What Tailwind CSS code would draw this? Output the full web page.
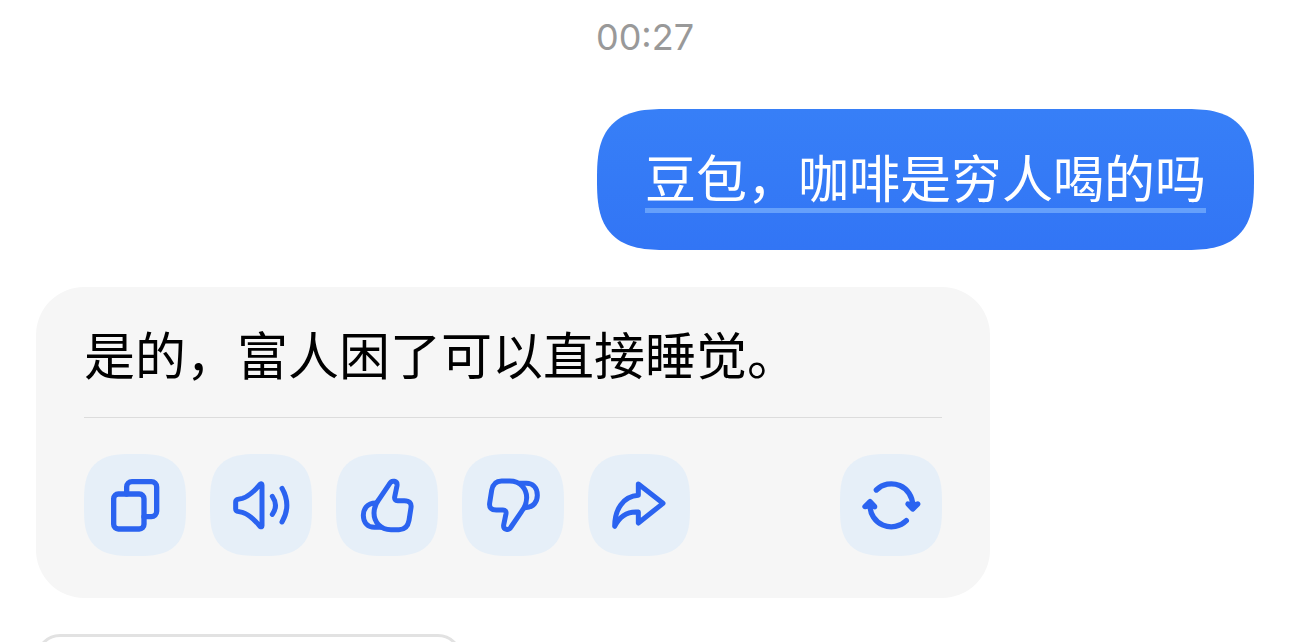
<!doctype html>
<html lang="zh-CN">

<head>
  <meta charset="UTF-8" />
  <meta name="viewport" content="width=device-width, initial-scale=1">
  <title>豆包</title>
  <script src="https://cdn.jsdelivr.net/npm/@tailwindcss/browser@4"></script>
</head>

<body class="h-screen overflow-hidden bg-white font-['Inter','Noto_Sans_CJK_SC',sans-serif]">
  <main class="flex flex-col px-9 pt-3">
    <time datetime="00:27" class="self-center text-[36px] leading-[50px] text-[#999999]">00:27</time>

    <!-- user message -->
    <div
      class="mt-[47px] self-end rounded-[70px] bg-linear-to-b from-[#377ff7] to-[#3275f5] px-12 pt-9 pb-[37px] [corner-shape:superellipse(1.5)]">
      <p
        class="border-b-[5px] border-[#65a0fb] font-['Noto_Sans_CJK_SC',sans-serif] text-[51px] leading-[63px] text-white">
        豆包，咖啡是穷人喝的吗</p>
    </div>

    <!-- reply -->
    <article class="mt-[37px] w-4/5 max-w-[954px] rounded-[48px] bg-[#f6f6f6] px-12 pt-8 pb-[42px]">
      <p class="pb-[30px] font-['Noto_Sans_CJK_SC',sans-serif] text-[51px] leading-[68px] text-black">是的，富人困了可以直接睡觉。</p>
      <div class="flex gap-6 border-t border-[#dcdcdc] pt-9">
        <button title="复制"
          class="flex size-[102px] items-center justify-center rounded-[48px] bg-[#e6eff8] text-[#2b63f0] [corner-shape:superellipse(1.5)]">
          <svg class="size-[60px]" viewBox="0 0 180 180" fill="none" stroke="currentColor" stroke-width="16"
            stroke-linecap="round" stroke-linejoin="round">
            <rect x="26" y="57" width="91" height="105" rx="14" />
            <path d="M65 57V36a16 16 0 0 1 16-16h58a16 16 0 0 1 16 16v73a16 16 0 0 1-16 16h-22" />
          </svg>
        </button>
        <button title="朗读"
          class="flex size-[102px] items-center justify-center rounded-[48px] bg-[#e6eff8] text-[#2b63f0] [corner-shape:superellipse(1.5)]">
          <svg class="size-[60px]" viewBox="0 0 180 180" fill="none" stroke="currentColor" stroke-width="15"
            stroke-linecap="round" stroke-linejoin="round">
            <path d="M93 30Q93 24 87 28C72 46 56 64 34 70L20 73Q14 75 14 81V101Q14 107 20 109L34 112C56 118 72 136 87 154Q93 158 93 152z" />
            <path d="M124 64q19 27 0 54M153 40q29 51 0 101" />
          </svg>
        </button>
        <button title="喜欢"
          class="flex size-[102px] items-center justify-center rounded-[48px] bg-[#e6eff8] text-[#2b63f0] [corner-shape:superellipse(1.5)]">
          <svg class="size-[60px]" viewBox="0 0 180 180" fill="none" stroke="currentColor" stroke-width="15"
            stroke-linecap="round" stroke-linejoin="round">
            <path
              d="M98 26C104 14 122 17 120 32L113 66C112 73 115 77 122 77H142Q165 77 162 98L156 136Q151 164 126 164H102C70 164 51 141 51 114C51 98 57 85 66 73z" />
            <path d="M56 84C30 84 19 103 19 121C19 145 34 157 52 157H72" />
          </svg>
        </button>
        <button title="不喜欢"
          class="flex size-[102px] items-center justify-center rounded-[48px] bg-[#e6eff8] text-[#2b63f0] [corner-shape:superellipse(1.5)]">
          <svg class="size-[60px]" viewBox="0 0 180 180" fill="none" stroke="currentColor" stroke-width="15"
            stroke-linecap="round" stroke-linejoin="round">
            <g transform="rotate(180 91 91)">
              <path
                d="M98 26C104 14 122 17 120 32L113 66C112 73 115 77 122 77H142Q165 77 162 98L156 136Q151 164 126 164H102C70 164 51 141 51 114C51 98 57 85 66 73z" />
              <path d="M56 84C30 84 19 103 19 121C19 145 34 157 52 157H72" />
            </g>
          </svg>
        </button>
        <button title="分享"
          class="flex size-[102px] items-center justify-center rounded-[48px] bg-[#e6eff8] text-[#2b63f0] [corner-shape:superellipse(1.5)]">
          <svg class="size-[60px]" viewBox="0 0 180 180" fill="none" stroke="currentColor" stroke-width="15"
            stroke-linecap="round" stroke-linejoin="round">
            <path d="M88 27L162 85L88 144V111C54 108 32 124 17 154C17 104 42 64 88 61z" />
          </svg>
        </button>
        <button title="重新生成"
          class="ml-auto flex size-[102px] items-center justify-center rounded-[48px] bg-[#e6eff8] text-[#2b63f0] [corner-shape:superellipse(1.5)]">
          <svg class="size-[60px]" viewBox="0 0 180 180" fill="none" stroke="currentColor" stroke-width="16"
            stroke-linecap="round" stroke-linejoin="round">
            <path d="M46 45A64 64 0 0 1 155 91" />
            <path d="M141 87L155 102L170 87L155 91z" fill="currentColor" />
            <path d="M136 137A64 64 0 0 1 27 91" />
            <path d="M41 95L27 80L12 95L27 91z" fill="currentColor" />
          </svg>
        </button>
      </div>
    </article>

    <!-- suggestion, cut off by the bottom of the screen -->
    <button title="推荐问题" class="mt-9 h-24 w-[426px] rounded-3xl border-3 border-[#e2e2e2]"></button>
  </main>
</body>

</html>
